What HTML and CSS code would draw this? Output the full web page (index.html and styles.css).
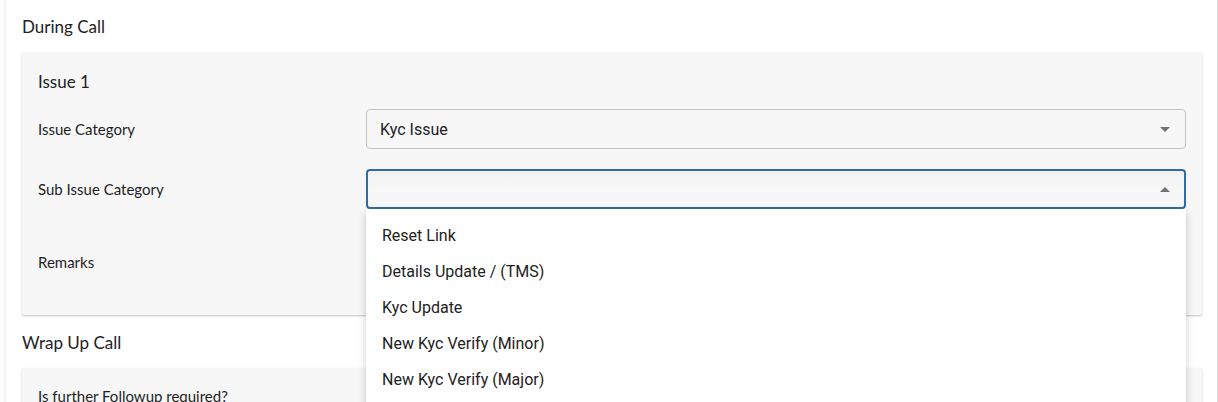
FILE: index.html
```html
<!DOCTYPE html>
<html>
<head>
<meta charset="utf-8">
<link rel="stylesheet" href="styles.css">
</head>
<body>
<div class="card">
  <h3 class="section-title">During Call</h3>
  <div class="panel">
    <h4 class="panel-title">Issue 1</h4>
    <div class="row">
      <label class="label">Issue Category</label>
      <div class="select">
        <span class="select-value">Kyc Issue</span>
        <span class="caret down"></span>
      </div>
    </div>
    <div class="row row-open">
      <label class="label">Sub Issue Category</label>
      <div class="select select-focus">
        <span class="select-value"></span>
        <span class="caret up"></span>
      </div>
      <ul class="menu">
        <li>Reset Link</li>
        <li>Details Update / (TMS)</li>
        <li>Kyc Update</li>
        <li>New Kyc Verify (Minor)</li>
        <li>New Kyc Verify (Major)</li>
      </ul>
    </div>
    <div class="row row-text">
      <label class="label">Remarks</label>
      <div class="textarea"></div>
    </div>
  </div>
  <h3 class="section-title">Wrap Up Call</h3>
  <div class="panel">
    <div class="row row-last">
      <label class="label">Is further Followup required?</label>
      <div class="radio-field"></div>
    </div>
  </div>
</div>
</body>
</html>
```

FILE: styles.css
```css
* { box-sizing: border-box; }
html, body { margin: 0; padding: 0; background: #fff; }
body {
  padding: 0 0 0 6px;
  overflow: hidden;
  height: 402px;
  font-family: Lato, "Liberation Sans", sans-serif;
  color: #222;
}
.card {
  background: #fff;
  margin-top: -20px;
  padding: 19px 15px 40px 16px;
  box-shadow: 0 0 4px rgba(0,0,0,0.14);
  border-right: 1px solid #ddd;
}
.section-title {
  margin: 16px 0 13px 0;
  font-weight: 400;
  font-size: 17px;
  line-height: 24px;
  color: #222;
}
.panel {
  background: #f7f7f7;
  padding: 16px 16px 20px 16px;
  box-shadow: 0 1px 2px rgba(0,0,0,0.25);
  border-radius: 2px;
}
.panel-title {
  margin: 2px 0 15px 0;
  font-weight: 400;
  font-size: 17px;
  line-height: 24px;
  color: #222;
}
.row {
  position: relative;
  display: flex;
  align-items: center;
  margin-bottom: 20px;
}
.row:last-child { margin-bottom: 0; }
.label {
  width: 328px;
  flex: none;
  font-size: 15px;
  color: #1e1e1e;
}
.select {
  flex: 1;
  height: 40px;
  border: 1px solid #c6c6c6;
  border-radius: 4px;
  background: #f7f7f7;
  display: flex;
  align-items: center;
  padding: 0 15px 0 13px;
}
.select-value {
  flex: 1;
  font-family: Roboto, "Liberation Sans", sans-serif;
  font-size: 16px;
  color: #222;
}
.select-focus {
  border: 2px solid #2f6ca6;
  padding: 0 14px 0 12px;
  background: linear-gradient(#f0f0f0, #f7f7f7 45%);
}
.caret {
  width: 0;
  height: 0;
  border-left: 5px solid transparent;
  border-right: 5px solid transparent;
}
.caret.down { border-top: 5px solid #727272; }
.caret.up { border-bottom: 5px solid #727272; }
.textarea {
  flex: 1;
  height: 66px;
}
.radio-field {
  flex: 1;
  height: 24px;
}
.menu {
  position: absolute;
  left: 328px;
  right: 0;
  top: 40px;
  margin: 0;
  padding: 9px 0 0 0;
  list-style: none;
  background: #fff;
  z-index: 10;
  box-shadow: 0 3px 8px rgba(0,0,0,0.2);
  height: 240px;
}
.menu li {
  height: 36px;
  line-height: 36px;
  padding-left: 16px;
  font-family: Roboto, "Liberation Sans", sans-serif;
  font-size: 16px;
  color: #222;
}
```
